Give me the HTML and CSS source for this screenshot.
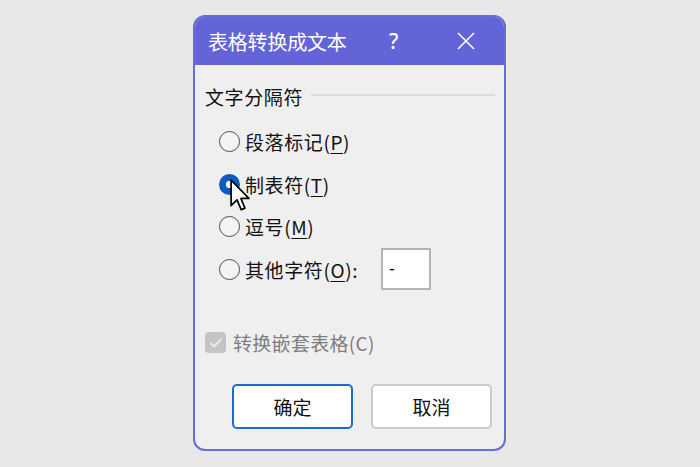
FILE: index.html
```html
<!DOCTYPE html>
<html lang="zh-CN">
<head>
<meta charset="utf-8">
<link rel="stylesheet" href="styles.css">
</head>
<body>
<div class="dialog">
  <div class="titlebar">
    <span class="title">表格转换成文本</span>
    <span class="help">?</span>
    <span class="close">
      <svg width="18" height="18" viewBox="0 0 18 18"><path d="M1 1 L17 17 M17 1 L1 17" stroke="#fff" stroke-width="1.6" fill="none"/></svg>
    </span>
  </div>
  <div class="body">
    <div class="group-head">
      <span class="group-label">文字分隔符</span>
      <span class="group-line"></span>
    </div>
    <div class="radios">
      <div class="row"><span class="radio"></span><span class="lbl">段落标记(<u>P</u>)</span></div>
      <div class="row cursor-row"><span class="radio on"></span><span class="lbl">制表符(<u>T</u>)</span>
        <svg class="cursor" width="21" height="33" viewBox="0 0 13.5 21"><path d="M0.7 0.7 L0.7 17 L4.5 13.3 L7.2 19.6 L9.6 18.6 L7 12.4 L12.2 12.4 Z" fill="#fff" stroke="#000" stroke-width="1.1" stroke-linejoin="round"/></svg>
      </div>
      <div class="row"><span class="radio"></span><span class="lbl">逗号(<u>M</u>)</span></div>
      <div class="row"><span class="radio"></span><span class="lbl">其他字符(<u>O</u>):</span><span class="textbox">-</span></div>
    </div>
    <div class="check-row">
      <span class="checkbox"><svg width="14" height="12" viewBox="0 0 14 12"><path d="M1.5 6 L5 9.5 L12.5 2" stroke="#ededed" stroke-width="1.8" fill="none"/></svg></span>
      <span class="check-lbl">转换嵌套表格(C)</span>
    </div>
    <div class="buttons">
      <button class="btn primary">确定</button>
      <button class="btn">取消</button>
    </div>
  </div>
</div>
</body>
</html>
```
FILE: styles.css
```css
html, body {
  margin: 0;
  padding: 0;
}
body {
  width: 700px;
  height: 467px;
  background: #e8e8e8;
  font-family: "Noto Sans", "Noto Sans CJK SC", sans-serif;
  overflow: hidden;
}
.dialog {
  box-sizing: border-box;
  width: 313px;
  height: 436px;
  margin: 15px 0 0 193px;
  border: 2px solid #6a6ad9;
  border-radius: 12px;
  background: #efefef;
  display: flex;
  flex-direction: column;
  overflow: hidden;
}
.titlebar {
  height: 48px;
  background: #6264d8;
  color: #fff;
  display: flex;
  align-items: center;
  padding-left: 13px;
  flex: none;
}
.title {
  font-family: "Noto Sans CJK SC", sans-serif;
  font-size: 20px;
  letter-spacing: -0.2px;
  width: 181px;
}
.help {
  font-family: "Noto Sans", sans-serif;
  font-size: 21px;
  font-weight: 500;
  width: 68px;
}
.close {
  display: flex;
  align-items: center;
}
.body {
  flex: 1;
  display: flex;
  flex-direction: column;
  padding: 18px 12px 0 10px;
}
.group-head {
  display: flex;
  align-items: center;
  height: 26px;
}
.group-label {
  font-family: "Noto Sans CJK SC", sans-serif;
  font-size: 19px;
  letter-spacing: 0.6px;
  color: #111;
}
.group-line {
  flex: 1;
  height: 2px;
  background: #dcdcdc;
  margin-left: 8px;
  margin-right: -3px;
  margin-top: -2px;
}
.radios {
  display: flex;
  flex-direction: column;
  padding-left: 14px;
  margin-top: 11.5px;
}
.row {
  height: 42.5px;
  display: flex;
  align-items: center;
  position: relative;
}
.radio {
  box-sizing: border-box;
  width: 21px;
  height: 21px;
  border-radius: 50%;
  border: 1.6px solid #4a4a4a;
  background: #f4f4f4;
  margin-right: 5px;
  flex: none;
}
.radio.on {
  border: none;
  background: radial-gradient(circle, #fff 0 3.3px, #0f5bbf 4px);
}
.lbl {
  font-family: "Noto Sans CJK SC", sans-serif;
  font-size: 19px;
  letter-spacing: 0.6px;
  color: #111;
}
.lbl u {
  text-underline-offset: 3px;
}
.textbox {
  box-sizing: border-box;
  width: 50px;
  height: 42px;
  margin-left: 23px;
  border: 2px solid #b4b4b4;
  background: #fff;
  font-size: 18px;
  line-height: 36px;
  padding-left: 6px;
  color: #111;
}
.cursor {
  position: absolute;
  left: 11px;
  top: 16px;
}
.check-row {
  display: flex;
  align-items: center;
  height: 26px;
  margin-top: 39px;
}
.checkbox {
  box-sizing: border-box;
  width: 21px;
  height: 21px;
  border-radius: 4px;
  background: #c4c4c4;
  display: flex;
  align-items: center;
  justify-content: center;
  margin-right: 7px;
}
.check-lbl {
  font-family: "Noto Sans CJK SC", sans-serif;
  font-size: 19px;
  letter-spacing: 0.3px;
  color: #7e7e7e;
}
.buttons {
  display: flex;
  justify-content: flex-end;
  gap: 18px;
  margin-top: 28.5px;
}
.btn {
  box-sizing: border-box;
  width: 121px;
  height: 45px;
  background: #fff;
  border: 2px solid #cbcbcb;
  border-radius: 5px;
  font-family: "Noto Sans CJK SC", sans-serif;
  font-size: 19px;
  color: #111;
  padding: 0;
}
.btn.primary {
  border-color: #1a6dd0;
}
```
